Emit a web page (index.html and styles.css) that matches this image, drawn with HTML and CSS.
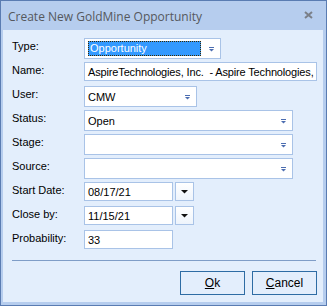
FILE: index.html
```html
<!DOCTYPE html>
<html>
<head>
<meta charset="utf-8">
<link rel="stylesheet" href="styles.css">
</head>
<body>
<div class="window">
  <div class="titlebar">
    <span class="title">Create New GoldMine Opportunity</span>
    <svg class="close" width="9" height="8" viewBox="0 0 9 8"><path d="M1 1 L8 7 M8 1 L1 7" stroke="#7a7f88" stroke-width="2"/></svg>
  </div>
  <div class="body">
    <div class="form">
      <div class="label">Type:</div>
      <div class="combo w-type">
        <span class="sel">Opportunity</span>
        <svg class="arrow" width="5" height="5" viewBox="0 0 5 5"><rect x="0" y="0" width="5" height="1" fill="#4c6db0"/><path d="M0 2 H5 L2.5 4.6 Z" fill="#4c6db0"/></svg>
      </div>

      <div class="label">Name:</div>
      <div class="text w-name"><span class="val">AspireTechnologies, Inc.&nbsp; - Aspire Technologies,</span></div>

      <div class="label">User:</div>
      <div class="combo w-user">
        <span class="val">CMW</span>
        <svg class="arrow" width="5" height="5" viewBox="0 0 5 5"><rect x="0" y="0" width="5" height="1" fill="#4c6db0"/><path d="M0 2 H5 L2.5 4.6 Z" fill="#4c6db0"/></svg>
      </div>

      <div class="label">Status:</div>
      <div class="combo w-wide">
        <span class="val">Open</span>
        <svg class="arrow" width="5" height="5" viewBox="0 0 5 5"><rect x="0" y="0" width="5" height="1" fill="#4c6db0"/><path d="M0 2 H5 L2.5 4.6 Z" fill="#4c6db0"/></svg>
      </div>

      <div class="label">Stage:</div>
      <div class="combo w-wide">
        <span class="val"></span>
        <svg class="arrow" width="5" height="5" viewBox="0 0 5 5"><rect x="0" y="0" width="5" height="1" fill="#4c6db0"/><path d="M0 2 H5 L2.5 4.6 Z" fill="#4c6db0"/></svg>
      </div>

      <div class="label">Source:</div>
      <div class="combo w-wide">
        <span class="val"></span>
        <svg class="arrow" width="5" height="5" viewBox="0 0 5 5"><rect x="0" y="0" width="5" height="1" fill="#4c6db0"/><path d="M0 2 H5 L2.5 4.6 Z" fill="#4c6db0"/></svg>
      </div>

      <div class="label">Start Date:</div>
      <div class="datefield">
        <div class="text w-date"><span class="val">08/17/21</span></div>
        <div class="datebtn"><svg width="7" height="5" viewBox="0 0 7 5"><path d="M0 1 H7 L3.5 4.6 Z" fill="#111"/></svg></div>
      </div>

      <div class="label">Close by:</div>
      <div class="datefield">
        <div class="text w-date"><span class="val">11/15/21</span></div>
        <div class="datebtn"><svg width="7" height="5" viewBox="0 0 7 5"><path d="M0 1 H7 L3.5 4.6 Z" fill="#111"/></svg></div>
      </div>

      <div class="label">Probability:</div>
      <div class="text w-date"><span class="val">33</span></div>
    </div>
    <div class="sep"></div>
    <div class="buttons">
      <div class="btn"><u>O</u>k</div>
      <div class="btn"><u>C</u>ancel</div>
    </div>
  </div>
</div>
</body>
</html>
```

FILE: styles.css
```css
html, body {
  margin: 0;
  padding: 0;
  background: #b6cdee;
}
.window {
  width: 327px;
  height: 306px;
  box-sizing: border-box;
  border: 1px solid #5a7cb2;
  background: #b6cdee;
  display: flex;
  flex-direction: column;
  font-family: "Liberation Sans", Arial, sans-serif;
  font-size: 11px;
  color: #000;
}
.titlebar {
  height: 29px;
  display: flex;
  align-items: center;
  justify-content: space-between;
  padding: 0 13px 0 7px;
}
.title {
  font-family: "Open Sans", "Noto Sans", sans-serif;
  font-size: 12px;
  color: #55585d;
  padding-top: 1px;
}
.close {
  display: block;
  margin-top: -1px;
}
.body {
  width: 320px;
  height: 272px;
  margin-left: 2px;
  box-sizing: border-box;
  background: #e3eefc;
  padding: 8px 6px 0 9px;
  display: flex;
  flex-direction: column;
}
.form {
  display: grid;
  grid-template-columns: 72px 1fr;
  grid-auto-rows: 24px;
  align-items: start;
}
.label {
  line-height: 14px;
  padding-top: 1px;
  white-space: nowrap;
}
.combo, .text {
  box-sizing: border-box;
  background: #fff;
  border: 1px solid #a9c3e7;
  display: flex;
  align-items: center;
  position: relative;
  overflow: hidden;
}
.combo { height: 21px; }
.text { height: 19px; }
.val {
  padding-left: 3px;
  white-space: nowrap;
}
.name-val {
  letter-spacing: -0.1px;
}
.arrow {
  position: absolute;
  right: 6px;
  top: 8px;
}
.w-type { width: 137px; }
.w-user { width: 113px; }
.w-wide { width: 209px; }
.w-name { width: 233px; }
.w-name .val { letter-spacing: -0.15px; }
.w-date { width: 89px; }
.sel {
  margin-left: 3px;
  width: 113px;
  height: 15px;
  box-sizing: border-box;
  background: #3399ff;
  color: #fff;
  border: 1px dotted #3a2a00;
  line-height: 13px;
  padding-left: 1px;
  white-space: nowrap;
}
.datefield {
  display: flex;
  gap: 2px;
}
.datebtn {
  width: 19px;
  height: 19px;
  box-sizing: border-box;
  border: 1px solid #a9c3e7;
  background: linear-gradient(#ffffff, #eef4fc);
  display: flex;
  align-items: center;
  justify-content: center;
}
.sep {
  height: 1px;
  background: #7f9dc7;
  margin-top: 6px;
  margin-right: 1px;
}
.buttons {
  display: flex;
  justify-content: flex-end;
  gap: 7px;
  margin-top: 10px;
}
.btn {
  width: 65px;
  height: 24px;
  box-sizing: border-box;
  border: 1px solid #2e6ca4;
  background: #e3eefc;
  display: flex;
  align-items: center;
  justify-content: center;
  font-size: 12px;
}
```
